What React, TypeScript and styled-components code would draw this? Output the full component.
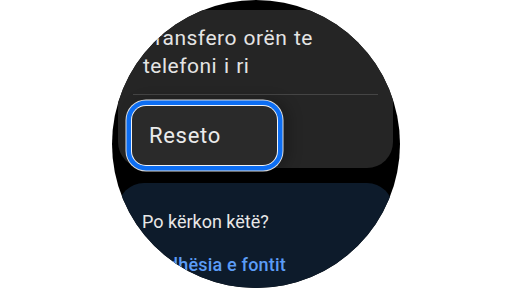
import React from "react";
import styled, { createGlobalStyle } from "styled-components";

const Global = createGlobalStyle`
  html, body { margin: 0; padding: 0; background: #ffffff; }
  body { font-family: Roboto, "Liberation Sans", sans-serif; }
`;

const Page = styled.div`
  width: 511px;
  height: 288px;
  display: flex;
  align-items: center;
  justify-content: center;
  background: #ffffff;
`;

const Watch = styled.div`
  width: 288px;
  height: 288px;
  border-radius: 50%;
  overflow: hidden;
  background: #000000;
  display: flex;
  flex-direction: column;
  gap: 15px;
  padding: 10px 6.5px 0;
  box-sizing: border-box;
`;

const Card = styled.section<{ $tone: "gray" | "navy" }>`
  flex-shrink: 0;
  background: ${(p) => (p.$tone === "gray" ? "#252525" : "#0d1b2b")};
  border-radius: ${(p) => (p.$tone === "gray" ? "0 0 26px 26px" : "26px 26px 0 0")};
  display: flex;
  flex-direction: column;
`;

const SettingCard = styled(Card)`
  padding: 14px 0 2px 14px;
  height: 158px;
  box-sizing: border-box;
`;

const Title = styled.div`
  padding-left: 11px;
  font-size: 21px;
  line-height: 28px;
  color: #e4e4e4;
  letter-spacing: 0.5px;
  word-spacing: 1px;
`;

const Divider = styled.div`
  height: 1px;
  background: #454545;
  margin: 14px 15px 11px 1px;
`;

const ResetButton = styled.button`
  align-self: flex-start;
  width: 145px;
  height: 59px;
  border: none;
  border-radius: 14px;
  background: #2a2a2a;
  color: #ebebeb;
  font-family: Roboto, "Liberation Sans", sans-serif;
  font-size: 22px;
  letter-spacing: 0.7px;
  text-align: left;
  padding: 0 0 0 17px;
  box-shadow:
    0 0 0 1px #f2f2f2,
    0 0 0 5.5px #0d6ef3,
    0 0 0 6.5px rgba(255, 255, 255, 0.85),
    6px 0 14px 6px rgba(0, 0, 0, 0.25);
`;

const SuggestCard = styled(Card)`
  padding: 26px 0 0 24px;
  height: 120px;
`;

const Question = styled.div`
  font-size: 18px;
  line-height: 26px;
  color: #e8e8e8;
`;

const LinkText = styled.a`
  margin-top: 17px;
  font-size: 18px;
  line-height: 26px;
  font-weight: 500;
  color: #5b9cf6;
  text-decoration: none;
  letter-spacing: 0.2px;
`;

export default function App() {
  return (
    <>
      <Global />
      <Page>
        <Watch>
          <SettingCard $tone="gray">
            <Title>
              Transfero orën te
              <br />
              telefoni i ri
            </Title>
            <Divider />
            <ResetButton>Reseto</ResetButton>
          </SettingCard>
          <SuggestCard $tone="navy">
            <Question>Po kërkon këtë?</Question>
            <LinkText href="#">Madhësia e fontit</LinkText>
          </SuggestCard>
        </Watch>
      </Page>
    </>
  );
}
